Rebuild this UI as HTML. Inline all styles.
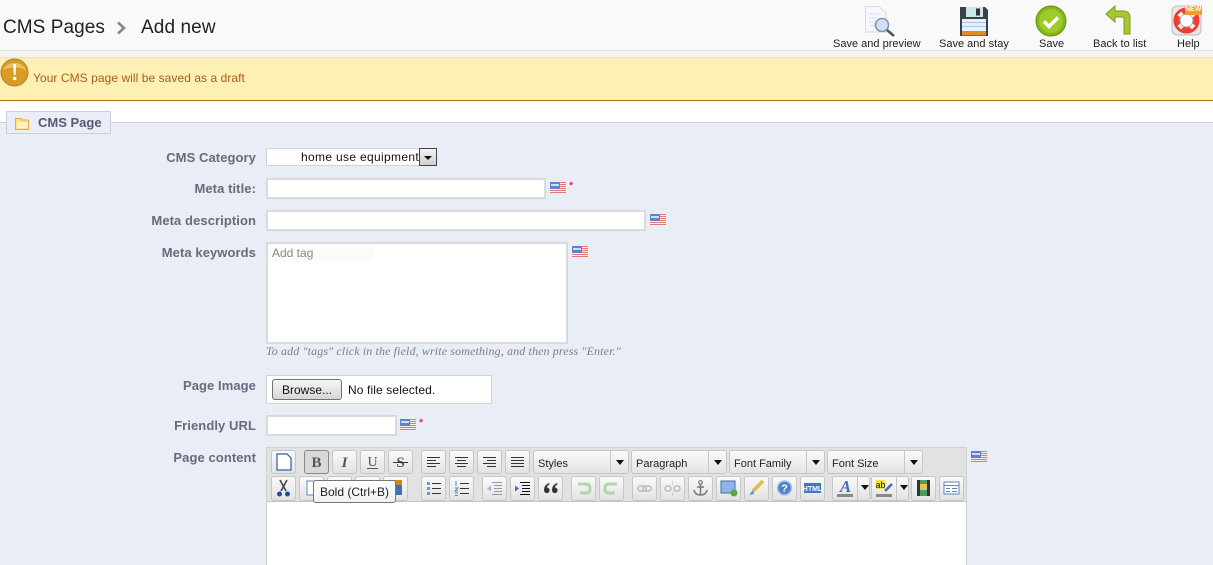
<!DOCTYPE html>
<html><head><meta charset="utf-8">
<style>
html,body{margin:0;padding:0;width:1213px;height:565px;overflow:hidden;background:#e9edf5;font-family:"Liberation Sans",sans-serif}
.a{position:absolute}
#page{position:relative;width:1213px;height:565px;overflow:hidden}
.t{position:absolute;white-space:nowrap}
.tb{position:absolute;top:38px;font-size:11px;color:#222;white-space:nowrap;line-height:13px;text-align:center;letter-spacing:.01px}
.lb{position:absolute;right:957px;font-size:13px;font-weight:bold;color:#666b7d;white-space:nowrap;line-height:16px;letter-spacing:.08px}
.inp{position:absolute;background:#fff;border:2px solid #dcdde0;box-sizing:border-box;outline:1px solid #d6d7da;outline-offset:-1px}
.b{position:absolute;width:25px;height:24px;box-sizing:border-box;border:1px solid #c6c6c6;border-radius:3px;background:linear-gradient(#fafafa,#e2e2e2)}
.b svg{position:absolute;left:0;top:0;width:23px;height:22px}
.sel{position:absolute;top:450px;height:24px;width:96px;box-sizing:border-box;border:1px solid #c6c6c6;border-radius:3px;background:linear-gradient(#fafafa,#e4e4e4);font-size:11px;color:#222;line-height:26px;padding-left:4px}
.sel i{position:absolute;right:0;top:0;width:17px;height:22px;border-left:1px solid #c6c6c6}
.sel i:after,.dd:after{content:"";position:absolute;left:5px;top:9px;border:4px solid transparent;border-top:5px solid #111;border-bottom:0}
.flag{position:absolute;width:16px;height:11px;background:repeating-linear-gradient(#e07a72 0 1px,#f7ecea 1px 2px)}
.flag:before{content:"";position:absolute;left:0;top:0;width:10px;height:7px;background:#5f82cc}
.flag:after{content:"";position:absolute;left:1px;top:2px;width:8px;height:2px;background:#cfdcf3}
.star{position:absolute;color:#c00;font-size:11px;font-weight:normal;line-height:11px}
.dd{position:absolute;width:13px;height:24px;top:476px}
</style></head>
<body><div id="page">
<!-- header -->
<div class="a" style="left:0;top:0;width:1213px;height:50px;background:#f9f9f9;border-bottom:1px solid #e2e2e2"></div>
<div class="a" style="left:0;top:51px;width:1213px;height:7px;background:#f6f5ee;border-bottom:1px solid #e3e1d3;box-sizing:border-box"></div>
<div class="t" style="left:3px;top:16px;font-size:19px;line-height:23px;color:#222;letter-spacing:.06px">CMS Pages</div>
<svg class="a" style="left:116px;top:21px" width="11" height="14"><path d="M2 1.500 L8 7 L2 12.500" fill="none" stroke="#888" stroke-width="2.600"/></svg>
<div class="t" style="left:141px;top:16px;font-size:19px;line-height:23px;color:#222;letter-spacing:.1px">Add new</div>

<!-- toolbar icons -->
<svg class="a" style="left:864px;top:5px" width="34" height="32" viewBox="0 0 34 32">
<path d="M1.500 1.500H15L22 8V27H1.500Z" fill="#f6f8fb" stroke="#d4d9e2"/>
<path d="M5 9h12M5 13h8M5 17h7M5 21h8" stroke="#d5deec"/>
<circle cx="18" cy="20" r="6.500" fill="#cfe0f3" stroke="#7f95b4" stroke-width="1.600"/>
<path d="M23 25l7 6" stroke="#555" stroke-width="2.600"/></svg>
<svg class="a" style="left:959px;top:6px" width="30" height="31" viewBox="0 0 30 31">
<path d="M1 1H26L29 4V30H1Z" fill="#3c4048"/>
<rect x="7" y="1" width="17" height="10" fill="#c9e6ea"/><rect x="17" y="2.500" width="4" height="7" fill="#333"/>
<rect x="3" y="13" width="24" height="12" fill="#e9f0f8"/><path d="M3 16.500h24M3 20.500h24" stroke="#a9c9e6"/>
<rect x="3" y="25" width="24" height="4.500" fill="#e58a1f"/></svg>
<svg class="a" style="left:1035px;top:5px" width="32" height="32" viewBox="0 0 32 32">
<circle cx="16" cy="16" r="15" fill="#84b51a" stroke="#6b9414"/><circle cx="16" cy="16" r="12" fill="#9ccb2a"/>
<path d="M9 16.500l5 5 9-9" fill="none" stroke="#fff" stroke-width="3.600"/></svg>
<svg class="a" style="left:1105px;top:5px" width="27" height="30" viewBox="0 0 27 30">
<path d="M1 9L10 1V6H18Q25 6 25 13V29H19V14Q19 12 17 12H10V17Z" fill="#a5c82e" stroke="#7d9c1e"/></svg>
<svg class="a" style="left:1171px;top:5px" width="32" height="32" viewBox="0 0 32 32">
<rect x="1" y="1" width="29" height="29" rx="5" fill="#e8e8e8" stroke="#bbb"/>
<circle cx="15.500" cy="15.500" r="6.500" fill="#fff" stroke="#999"/>
<circle cx="15.500" cy="15.500" r="10" fill="none" stroke="#ee3d33" stroke-width="6"/>
<path d="M8.300 8.300l2.600 2.600M22.700 22.700l-2.600-2.600M22.700 8.300l-2.600 2.600M8.300 22.700l2.600-2.600" stroke="#eee" stroke-width="5"/>
<rect x="14" y="1" width="17" height="9" fill="#f59a23"/></svg>
<div class="t" style="left:1185px;top:5px;font-size:7px;font-weight:bold;color:#fff;line-height:9px">NEW</div>
<div class="tb" style="left:833px">Save and preview</div>
<div class="tb" style="left:939px">Save and stay</div>
<div class="tb" style="left:1039px">Save</div>
<div class="tb" style="left:1093px">Back to list</div>
<div class="tb" style="left:1177px">Help</div>

<!-- warning -->
<div class="a" style="left:0;top:58px;width:1213px;height:43px;box-sizing:border-box;background:#feefb3;border-bottom:1px solid #b4660e"></div>
<svg class="a" style="left:0;top:58px" width="30" height="30" viewBox="0 0 30 30">
<circle cx="14.500" cy="14.500" r="13.500" fill="#d99c21" stroke="#a9863f"/><path d="M3 12a12 10 0 0 1 23 0q-11-5-23 0z" fill="#e9bf62"/>
<path d="M13.200 6h3l-.6 11h-1.800z" fill="#fff"/><circle cx="14.700" cy="20.500" r="1.800" fill="#fff"/></svg>
<div class="t" style="left:33px;top:71px;font-size:12px;line-height:15px;color:#a95f18;letter-spacing:.06px">Your CMS page will be saved as a draft</div>

<!-- form area -->
<div class="a" style="left:0;top:101px;width:1213px;height:21px;background:#fff"></div>
<div class="a" style="left:0;top:122px;width:1213px;height:1px;background:#ccced9"></div>
<div class="a" style="left:6px;top:111px;width:105px;height:23px;box-sizing:border-box;background:#e9edf5;border:1px solid #ccced9"></div>
<svg class="a" style="left:15px;top:117px" width="15" height="13" viewBox="0 0 15 13"><path d="M.5 1.500H6L7 3H13.500V12.500H.5Z" fill="#fbe08a" stroke="#e9a93c"/><rect x="2" y="5" width="11" height="6" fill="#fff3c4"/></svg>
<div class="t" style="left:38px;top:115px;font-size:13px;font-weight:bold;line-height:15px;color:#585a75">CMS Page</div>

<div class="lb" style="top:150px">CMS Category</div>
<div class="a" style="left:266px;top:148px;width:171px;height:18px;box-sizing:border-box;background:#fff;border:1px solid #d2d3d6"></div>
<div class="t" style="left:301px;top:150px;font-size:12px;line-height:14px;color:#111;letter-spacing:.33px">home use equipment</div>
<div class="a" style="left:419px;top:148px;width:18px;height:18px;box-sizing:border-box;background:linear-gradient(#f2f2f2,#cfcfcf);border:1px solid #444"></div>
<div class="a" style="left:424px;top:156px;border:4px solid transparent;border-top:4px solid #111;border-bottom:0"></div>

<div class="lb" style="top:181px">Meta title:</div>
<div class="inp" style="left:266px;top:178px;width:280px;height:21px"></div>
<div class="flag" style="left:550px;top:182px"></div><div class="star" style="left:569px;top:181px">*</div>

<div class="lb" style="top:213px">Meta description</div>
<div class="inp" style="left:266px;top:210px;width:380px;height:21px"></div>
<div class="flag" style="left:650px;top:214px"></div>

<div class="lb" style="top:245px">Meta keywords</div>
<div class="inp" style="left:266px;top:242px;width:302px;height:102px"></div>
<div class="a" style="left:268px;top:244px;width:106px;height:18px;background:#fbfbfb"></div>
<div class="t" style="left:272px;top:246px;font-size:12px;line-height:14px;color:#888">Add tag</div>
<div class="flag" style="left:572px;top:246px"></div>
<div class="t" style="left:266px;top:344px;font-family:'Liberation Serif',serif;font-style:italic;font-size:12px;line-height:14px;color:#7f7f7f;letter-spacing:.125px">To add "tags" click in the field, write something, and then press "Enter."</div>

<div class="lb" style="top:378px">Page Image</div>
<div class="a" style="left:266px;top:375px;width:226px;height:29px;box-sizing:border-box;background:#fff;border:1px solid #d2d3d6"></div>
<div class="a" style="left:272px;top:379px;width:70px;height:21px;box-sizing:border-box;background:linear-gradient(#f6f6f6,#d6d6d6);border:1px solid #707070;border-radius:3px;font-size:12px;line-height:20px;text-align:center;color:#111">Browse...</div>
<div class="t" style="left:348px;top:383px;font-size:12px;line-height:14px;color:#111;letter-spacing:.12px">No file selected.</div>

<div class="lb" style="top:418px">Friendly URL</div>
<div class="inp" style="left:266px;top:415px;width:131px;height:21px"></div>
<div class="flag" style="left:400px;top:419px"></div><div class="star" style="left:419px;top:418px">*</div>

<div class="lb" style="top:450px">Page content</div>
<div class="flag" style="left:971px;top:451px"></div>

<!-- editor -->
<div class="a" style="left:266px;top:447px;width:701px;height:130px;box-sizing:border-box;background:#fff;border:1px solid #d0d0d0"></div>
<div class="a" style="left:267px;top:448px;width:699px;height:53px;background:#e2e2e2;border-bottom:1px solid #c4c4c4"></div>

<!-- row 1 -->
<div class="b" style="left:271px;top:450px"><svg viewBox="0 0 23 22"><path d="M5 3H15L19 7V19H5Z" fill="#fff" stroke="#2d5f9e" stroke-width="1.200"/></svg></div>
<div class="b" style="left:304px;top:450px;border-color:#888;background:#d8d8d8"><svg viewBox="0 0 23 22"><text x="11.500" y="16" text-anchor="middle" font-family="Liberation Serif,serif" font-weight="bold" font-size="15" fill="#555">B</text></svg></div>
<div class="b" style="left:332px;top:450px"><svg viewBox="0 0 23 22"><text x="11.500" y="16" text-anchor="middle" font-family="Liberation Serif,serif" font-style="italic" font-weight="bold" font-size="15" fill="#555">I</text></svg></div>
<div class="b" style="left:360px;top:450px"><svg viewBox="0 0 23 22"><text x="11.500" y="15" text-anchor="middle" font-family="Liberation Serif,serif" font-size="14" fill="#555">U</text><path d="M6 17.500h11" stroke="#555"/></svg></div>
<div class="b" style="left:388px;top:450px"><svg viewBox="0 0 23 22"><text x="11.500" y="16" text-anchor="middle" font-family="Liberation Serif,serif" font-weight="bold" font-size="15" fill="#555">S</text><path d="M4 11.500h15" stroke="#333"/></svg></div>
<div class="b" style="left:421px;top:450px"><svg viewBox="0 0 23 22"><path d="M5 6.500h13M5 9.500h9M5 12.500h13M5 15.500h9" stroke="#333"/></svg></div>
<div class="b" style="left:449px;top:450px"><svg viewBox="0 0 23 22"><path d="M5 6.500h13M7 9.500h9M5 12.500h13M7 15.500h9" stroke="#333"/></svg></div>
<div class="b" style="left:477px;top:450px"><svg viewBox="0 0 23 22"><path d="M5 6.500h13M9 9.500h9M5 12.500h13M9 15.500h9" stroke="#333"/></svg></div>
<div class="b" style="left:505px;top:450px"><svg viewBox="0 0 23 22"><path d="M5 6.500h13M5 9.500h13M5 12.500h13M5 15.500h13" stroke="#333"/></svg></div>
<div class="sel" style="left:533px">Styles<i></i></div>
<div class="sel" style="left:631px">Paragraph<i></i></div>
<div class="sel" style="left:729px">Font Family<i></i></div>
<div class="sel" style="left:827px">Font Size<i></i></div>

<!-- row 2 -->
<div class="b" style="left:271px;top:476px;height:25px"><svg viewBox="0 0 23 22"><path d="M8 3l6 11M15 3l-6 11" stroke="#444" stroke-width="1.600"/><circle cx="7.500" cy="17" r="2.500" fill="#1d4f9e"/><circle cx="15.500" cy="17" r="2.500" fill="#1d4f9e"/></svg></div>
<div class="b" style="left:299px;top:476px;height:25px"><svg viewBox="0 0 23 22"><path d="M7 4H14L17 7V18H7Z" fill="#fff" stroke="#5c86c0"/></svg></div>
<div class="b" style="left:327px;top:476px;height:25px"></div>
<div class="b" style="left:355px;top:476px;height:25px"></div>
<div class="b" style="left:383px;top:476px;height:25px"><svg viewBox="0 0 23 22"><rect x="9" y="3" width="9" height="5" fill="#c98a2c"/><rect x="8" y="8" width="10" height="10" fill="#3f6fb7"/></svg></div>
<div class="b" style="left:421px;top:476px;height:25px"><svg viewBox="0 0 23 22"><path d="M10 6.500h9M10 11.500h9M10 16.500h9" stroke="#333"/><path d="M5 5h3v3H5zM5 10h3v3H5zM5 15h3v3H5z" fill="#6f94c9"/></svg></div>
<div class="b" style="left:449px;top:476px;height:25px"><svg viewBox="0 0 23 22"><path d="M10 6.500h9M10 11.500h9M10 16.500h9" stroke="#333"/><path d="M6 4v5M5 11h3l-3 3h3M5 16h3M5 18.500h3" stroke="#5c86c0" fill="none"/></svg></div>
<div class="b" style="left:482px;top:476px;height:25px"><svg viewBox="0 0 23 22"><path d="M9 5.500h10M11 8.500h8M11 11.500h8M11 14.500h8M9 17.500h10" stroke="#999"/><path d="M4 11.500l4-3v6z" fill="#9db7dd"/></svg></div>
<div class="b" style="left:510px;top:476px;height:25px"><svg viewBox="0 0 23 22"><path d="M9 5.500h10M11 8.500h8M11 11.500h8M11 14.500h8M9 17.500h10" stroke="#111"/><path d="M8 11.500l-4-3v6z" fill="#3f6fb7"/></svg></div>
<div class="b" style="left:538px;top:476px;height:25px"><svg viewBox="0 0 23 22"><path d="M10 6Q5 8 5 13a2.800 2.800 0 1 0 3-2.500Q8 8.500 10.500 7.500ZM18 6Q13 8 13 13a2.800 2.800 0 1 0 3-2.500Q16 8.500 18.500 7.500Z" fill="#333"/></svg></div>
<div class="b" style="left:571px;top:476px;height:25px"><svg viewBox="0 0 23 22"><path d="M6 7H14Q18 7 18 11.500T14 16H8" fill="none" stroke="#b7d4b0" stroke-width="3"/></svg></div>
<div class="b" style="left:599px;top:476px;height:25px"><svg viewBox="0 0 23 22"><path d="M17 7H9Q5 7 5 11.500T9 16H15" fill="none" stroke="#b7d4b0" stroke-width="3"/></svg></div>
<div class="b" style="left:632px;top:476px;height:25px"><svg viewBox="0 0 23 22"><rect x="5" y="9" width="8" height="5" rx="2.500" fill="none" stroke="#bbb" stroke-width="1.500"/><rect x="10" y="9" width="8" height="5" rx="2.500" fill="none" stroke="#bbb" stroke-width="1.500"/></svg></div>
<div class="b" style="left:660px;top:476px;height:25px"><svg viewBox="0 0 23 22"><rect x="4" y="9" width="6" height="5" rx="2.500" fill="none" stroke="#bbb" stroke-width="1.500"/><rect x="13" y="9" width="6" height="5" rx="2.500" fill="none" stroke="#bbb" stroke-width="1.500"/><path d="M11.500 4v4M11.500 15v4" stroke="#c3d3ea"/></svg></div>
<div class="b" style="left:688px;top:476px;height:25px"><svg viewBox="0 0 23 22"><circle cx="11.500" cy="5.500" r="1.800" fill="none" stroke="#777" stroke-width="1.200"/><path d="M11.500 7v11M8 10h7M5 13q1 5 6.500 5T18 13" fill="none" stroke="#777" stroke-width="1.500"/></svg></div>
<div class="b" style="left:716px;top:476px;height:25px"><svg viewBox="0 0 23 22"><rect x="4" y="4" width="14" height="12" fill="#8fb4e6" stroke="#3f6fb7"/><circle cx="17" cy="16" r="3.500" fill="#5aa83c"/></svg></div>
<div class="b" style="left:744px;top:476px;height:25px"><svg viewBox="0 0 23 22"><path d="M18 4L8 14" stroke="#e5b94a" stroke-width="3.500"/><path d="M8 13l-4 5 5-1z" fill="#5f8fd0"/></svg></div>
<div class="b" style="left:772px;top:476px;height:25px"><svg viewBox="0 0 23 22"><circle cx="11.500" cy="11" r="7" fill="#4d84c9" stroke="#a6c4e8" stroke-width="1.500"/><text x="11.500" y="15" text-anchor="middle" font-size="11" font-weight="bold" fill="#fff">?</text></svg></div>
<div class="b" style="left:800px;top:476px;height:25px"><svg viewBox="0 0 23 22"><rect x="3" y="6" width="17" height="10" fill="#3f78c9"/><text x="11.500" y="14" text-anchor="middle" font-size="7" font-weight="bold" fill="#fff">HTML</text></svg></div>
<div class="b" style="left:832px;top:476px;height:25px;width:38px"><svg style="width:25px" viewBox="0 0 23 22"><text x="11.500" y="15" text-anchor="middle" font-family="Liberation Serif,serif" font-style="italic" font-weight="bold" font-size="17" fill="#3f6fb7">A</text><rect x="3" y="17" width="16" height="3" fill="#888"/></svg><div class="a" style="left:24px;top:0;width:1px;height:23px;background:#c6c6c6"></div></div>
<div class="dd" style="left:856px"></div>
<div class="b" style="left:871px;top:476px;height:25px;width:38px"><svg style="width:25px" viewBox="0 0 23 22"><rect x="3" y="3" width="9" height="9" fill="#f0e34a"/><text x="7.500" y="11" text-anchor="middle" font-size="9" fill="#111">ab</text><path d="M12 14l7-7" stroke="#3f6fb7" stroke-width="2.500"/><rect x="3" y="17" width="16" height="3" fill="#888"/></svg><div class="a" style="left:24px;top:0;width:1px;height:23px;background:#c6c6c6"></div></div>
<div class="dd" style="left:895px"></div>
<div class="b" style="left:911px;top:476px;height:25px"><svg viewBox="0 0 23 22"><rect x="5" y="3" width="13" height="16" fill="#4a9a6a"/><path d="M5 3h3v16H5zM15 3h3v16h-3z" fill="#333"/><rect x="8" y="7" width="7" height="6" fill="#e0c45a"/></svg></div>
<div class="b" style="left:939px;top:476px;height:25px"><svg viewBox="0 0 23 22"><rect x="4" y="5" width="15" height="12" fill="#fff" stroke="#5c86c0"/><path d="M4 8.500h15M6 11.500h4M12 11.500h5M6 14.500h4M12 14.500h5" stroke="#5c86c0"/></svg></div>

<!-- tooltip -->
<div class="a" style="left:313px;top:480px;width:83px;height:23px;box-sizing:border-box;background:linear-gradient(#fff,#eef0f6);border:1px solid #767676;border-radius:3px;font-size:12px;line-height:22px;text-align:center;color:#222">Bold (Ctrl+B)</div>
</div></body></html>
